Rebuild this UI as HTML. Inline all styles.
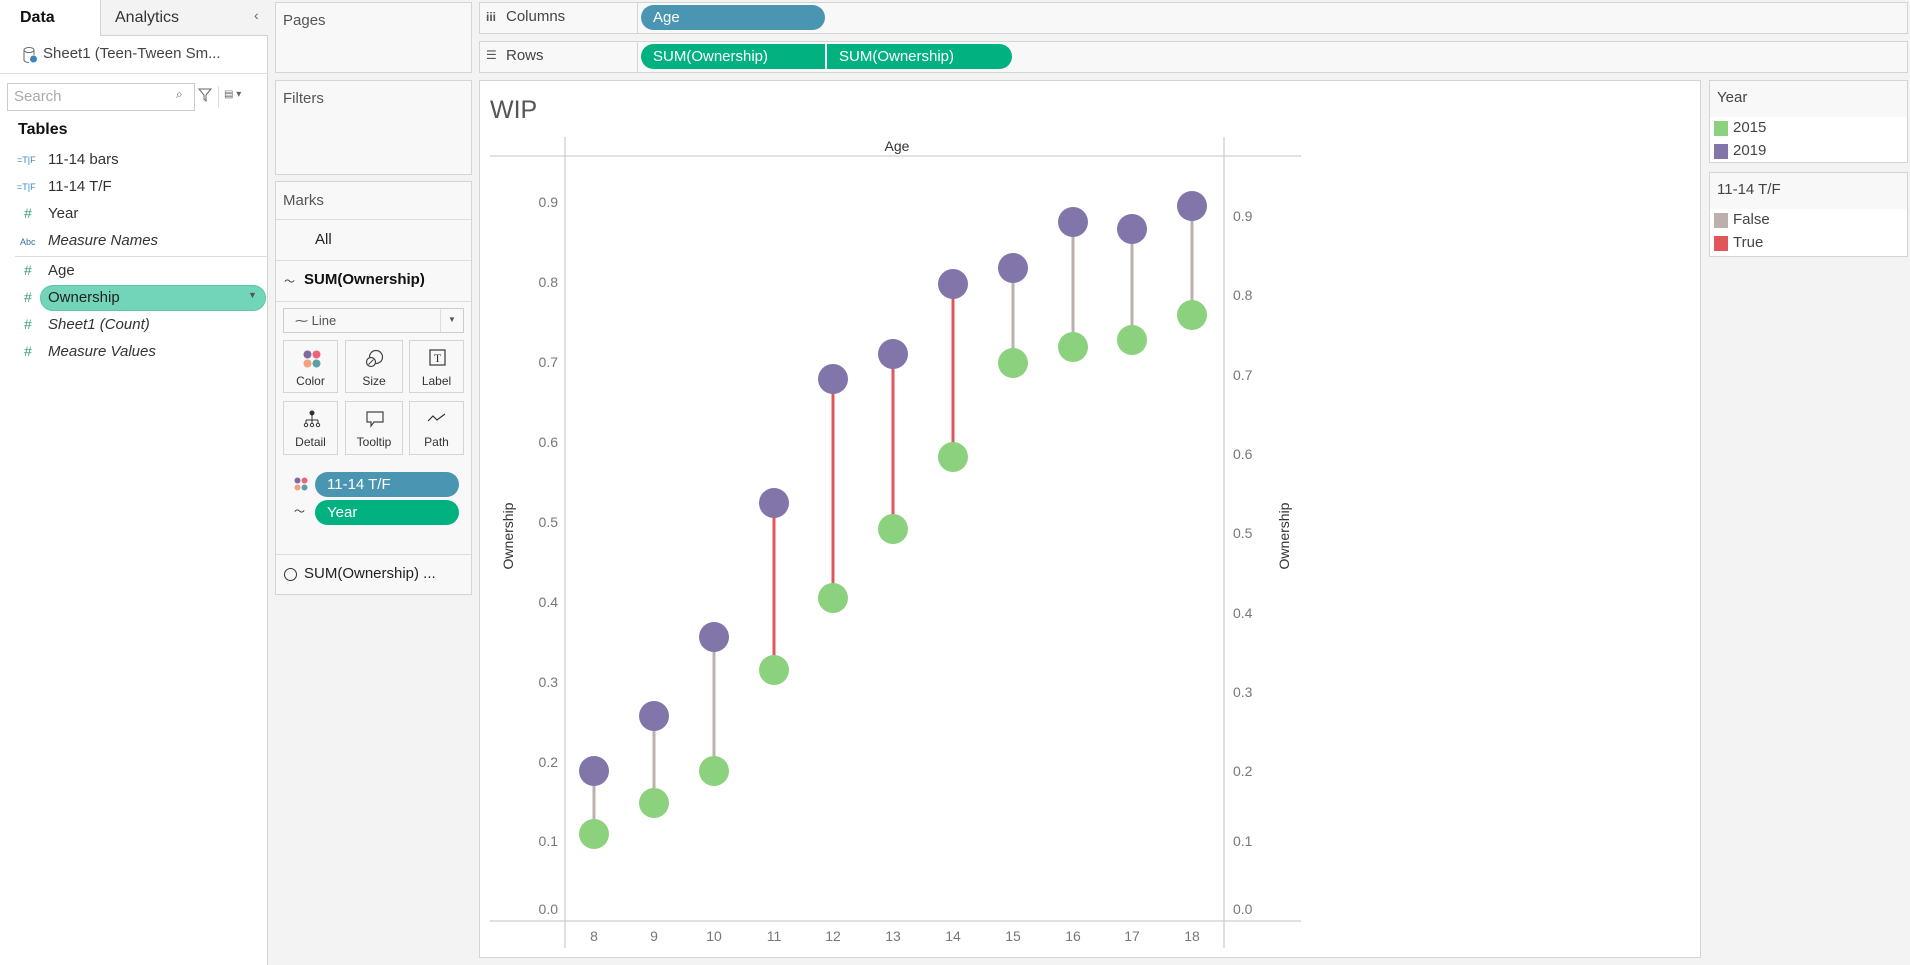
<!DOCTYPE html>
<html><head><meta charset="utf-8"><style>
*{box-sizing:border-box;margin:0;padding:0}
body{width:1910px;height:965px;background:#f3f3f3;font-family:"Liberation Sans",sans-serif;color:#333;position:relative;overflow:hidden;font-size:15px}
.a{position:absolute}
.box{position:absolute;background:#f8f8f8;border:1px solid #d4d4d4}
.t{position:absolute;white-space:nowrap}
.pill{position:absolute;color:#fff;border-radius:13px;padding-left:12px;font-size:15px;line-height:25px;white-space:nowrap}
.btn{position:absolute;border:1px solid #d4d4d4;background:#f8f8f8;font-size:12px;text-align:center}
.btn span{position:absolute;left:0;right:0;top:33px}
.hash{color:#3a9e7e;font-size:14px}
</style></head><body>
<!-- left panel -->
<div class="a" style="left:0;top:0;width:268px;height:965px;background:#fff;border-right:1px solid #d4d4d4"></div>
<div class="a" style="left:100px;top:0;width:168px;height:36px;background:#f3f3f3;border-left:1px solid #d4d4d4;border-bottom:1px solid #d4d4d4"></div>
<div class="t" style="left:20px;top:9px;font-weight:bold;font-size:16px;color:#111">Data</div>
<div class="t" style="left:115px;top:9px;font-size:16px">Analytics</div>
<div class="t" style="left:254px;top:7px;font-size:14px;color:#666">‹</div>
<svg class="a" style="left:22px;top:46px" width="16" height="18"><ellipse cx="7" cy="4" rx="5" ry="2.5" fill="none" stroke="#666"/><path d="M2 4v10c0 1.5 2.5 2.5 5 2.5M12 4v5" fill="none" stroke="#666"/><circle cx="11.5" cy="13" r="3.5" fill="#3c84c0"/></svg>
<div class="t" style="left:43px;top:45px;font-size:15px;color:#444">Sheet1 (Teen-Tween Sm...</div>
<div class="a" style="left:0;top:73px;width:268px;height:1px;background:#e0e0e0"></div>
<div class="a" style="left:7px;top:83px;width:188px;height:28px;border:1px solid #ccc;background:#fff"></div>
<div class="t" style="left:14px;top:88px;color:#aaa;font-size:15px">Search</div>
<div class="t" style="left:176px;top:87px;color:#666;font-size:12px">⌕</div>
<svg class="a" style="left:198px;top:88px" width="14" height="14"><path d="M1 1h12L8 7v6L6 11V7z" fill="none" stroke="#666"/></svg>
<div class="a" style="left:218px;top:86px;width:1px;height:22px;background:#ddd"></div>
<div class="t" style="left:224px;top:89px;font-size:10px;color:#666">▤ ▾</div>
<div class="t" style="left:18px;top:121px;font-weight:bold;font-size:16px;color:#111">Tables</div>
<div class="t" style="left:17px;top:155px;font-size:9px;color:#3c84c0">=T|F</div><div class="t" style="left:48px;top:151px">11-14 bars</div>
<div class="t" style="left:17px;top:182px;font-size:9px;color:#3c84c0">=T|F</div><div class="t" style="left:48px;top:178px">11-14 T/F</div>
<div class="t hash" style="left:24px;top:205px">#</div><div class="t" style="left:48px;top:205px">Year</div>
<div class="t" style="left:20px;top:237px;font-size:9px;color:#3c6e9c">Abc</div><div class="t" style="left:48px;top:232px;font-style:italic">Measure Names</div>
<div class="a" style="left:15px;top:256px;width:253px;height:1px;background:#ddd"></div>
<div class="t hash" style="left:24px;top:262px">#</div><div class="t" style="left:48px;top:262px">Age</div>
<div class="a" style="left:40px;top:285px;width:226px;height:26px;border-radius:13px;background:#72d4b8;border:1px solid #5cc7a6"></div>
<div class="t hash" style="left:24px;top:289px">#</div><div class="t" style="left:48px;top:289px;color:#222">Ownership</div>
<div class="t" style="left:248px;top:290px;font-size:9px;color:#555">▼</div>
<div class="t hash" style="left:24px;top:316px">#</div><div class="t" style="left:48px;top:316px;font-style:italic">Sheet1 (Count)</div>
<div class="t hash" style="left:24px;top:343px">#</div><div class="t" style="left:48px;top:343px;font-style:italic">Measure Values</div>

<!-- Pages / Filters / Marks -->
<div class="box" style="left:275px;top:2px;width:197px;height:71px"></div>
<div class="t" style="left:283px;top:12px;color:#555">Pages</div>
<div class="box" style="left:275px;top:80px;width:197px;height:95px"></div>
<div class="t" style="left:283px;top:90px;color:#555">Filters</div>
<div class="box" style="left:275px;top:181px;width:197px;height:414px"></div>
<div class="t" style="left:283px;top:192px;color:#555">Marks</div>
<div class="a" style="left:276px;top:219px;width:195px;height:1px;background:#ddd"></div>
<div class="t" style="left:315px;top:231px;color:#222">All</div>
<div class="a" style="left:276px;top:260px;width:195px;height:1px;background:#ddd"></div>
<div class="t" style="left:284px;top:273px;font-size:11px">〜</div>
<div class="t" style="left:304px;top:271px;font-weight:bold;color:#111">SUM(Ownership)</div>
<div class="a" style="left:276px;top:301px;width:195px;height:1px;background:#ddd"></div>
<div class="a" style="left:283px;top:308px;width:181px;height:25px;border:1px solid #ccc;background:#f8f8f8"></div>
<div class="a" style="left:440px;top:309px;width:1px;height:23px;background:#ddd"></div>
<div class="t" style="left:295px;top:313px;font-size:13px;color:#555">⁓ Line</div>
<div class="t" style="left:448px;top:315px;font-size:8px;color:#555">▼</div>
<div class="btn" style="left:283px;top:340px;width:55px;height:53px"><svg class="a" style="left:19px;top:9px" width="18" height="18"><circle cx="4.5" cy="4.5" r="4" fill="#7e6a9e"/><circle cx="13.5" cy="4.5" r="4" fill="#f0627a"/><circle cx="4.5" cy="13.5" r="4" fill="#f4a07a"/><circle cx="13.5" cy="13.5" r="4" fill="#5e9ea8"/></svg><span>Color</span></div>
<div class="btn" style="left:345px;top:340px;width:58px;height:53px"><svg class="a" style="left:19px;top:8px" width="20" height="20"><circle cx="11" cy="8" r="6.5" fill="none" stroke="#444" stroke-width="1.2"/><circle cx="6" cy="13" r="4.5" fill="#f8f8f8" stroke="#444" stroke-width="1.2"/><path d="M3.5 15.5l5-5" stroke="#444"/></svg><span>Size</span></div>
<div class="btn" style="left:409px;top:340px;width:55px;height:53px"><svg class="a" style="left:19px;top:8px" width="18" height="18"><rect x="1" y="1" width="15" height="15" fill="none" stroke="#444" stroke-width="1.3"/><text x="8.5" y="13" text-anchor="middle" font-family="Liberation Serif" font-size="12" fill="#333">T</text></svg><span>Label</span></div>
<div class="btn" style="left:283px;top:401px;width:55px;height:54px"><svg class="a" style="left:19px;top:8px" width="18" height="18"><circle cx="9" cy="3" r="2.5" fill="#333"/><path d="M9 5v5M3 10h12M3 10v3M9 10v3M15 10v3" stroke="#333"/><circle cx="3" cy="15" r="1.7" fill="none" stroke="#333"/><circle cx="9" cy="15" r="1.7" fill="none" stroke="#333"/><circle cx="15" cy="15" r="1.7" fill="none" stroke="#333"/></svg><span>Detail</span></div>
<div class="btn" style="left:345px;top:401px;width:58px;height:54px"><svg class="a" style="left:20px;top:9px" width="20" height="18"><path d="M1 1h16v10H8l-3 4v-4H1z" fill="none" stroke="#444" stroke-width="1.2"/></svg><span>Tooltip</span></div>
<div class="btn" style="left:409px;top:401px;width:55px;height:54px"><svg class="a" style="left:17px;top:10px" width="20" height="12"><path d="M1 9l5-5 4 4 8-6" fill="none" stroke="#333" stroke-width="1.2"/></svg><span>Path</span></div>
<svg class="a" style="left:294px;top:477px" width="14" height="14"><circle cx="3.5" cy="3.5" r="3" fill="#7e6a9e"/><circle cx="10.5" cy="3.5" r="3" fill="#f0627a"/><circle cx="3.5" cy="10.5" r="3" fill="#f4a07a"/><circle cx="10.5" cy="10.5" r="3" fill="#5e9ea8"/></svg>
<div class="pill" style="left:315px;top:472px;width:144px;background:#4a96b2">11-14 T/F</div>
<div class="t" style="left:294px;top:503px;font-size:11px">〜</div>
<div class="pill" style="left:315px;top:500px;width:144px;background:#02b180">Year</div>
<div class="a" style="left:276px;top:554px;width:195px;height:1px;background:#ddd"></div>
<div class="a" style="left:284px;top:568px;width:13px;height:13px;border:1.3px solid #333;border-radius:50%"></div>
<div class="t" style="left:304px;top:565px;color:#222">SUM(Ownership) ...</div>

<!-- shelves -->
<div class="box" style="left:479px;top:2px;width:1429px;height:32px"></div>
<div class="a" style="left:637px;top:2px;width:1px;height:32px;background:#d4d4d4"></div>
<div class="t" style="left:486px;top:10px;font-size:12px;font-weight:bold;color:#555">iii</div>
<div class="t" style="left:506px;top:8px;color:#444">Columns</div>
<div class="pill" style="left:641px;top:5px;width:184px;background:#4a96b2">Age</div>
<div class="box" style="left:479px;top:41px;width:1429px;height:32px"></div>
<div class="a" style="left:637px;top:41px;width:1px;height:32px;background:#d4d4d4"></div>
<div class="t" style="left:486px;top:48px;font-size:12px;color:#555">☰</div>
<div class="t" style="left:506px;top:47px;color:#444">Rows</div>
<div class="pill" style="left:641px;top:44px;width:184px;background:#02b180;border-radius:13px 0 0 13px">SUM(Ownership)</div>
<div class="pill" style="left:827px;top:44px;width:185px;background:#02b180;border-radius:0 13px 13px 0">SUM(Ownership)</div>

<!-- legends -->
<div class="box" style="left:1709px;top:80px;width:199px;height:83px;background:#fff"></div>
<div class="a" style="left:1710px;top:81px;width:197px;height:36px;background:#f8f8f8"></div>
<div class="t" style="left:1717px;top:89px;color:#444">Year</div>
<div class="a" style="left:1714px;top:121px;width:14px;height:15px;background:#8cd17d"></div><div class="t" style="left:1733px;top:119px;color:#444">2015</div>
<div class="a" style="left:1714px;top:144px;width:14px;height:15px;background:#8175aa"></div><div class="t" style="left:1733px;top:142px;color:#444">2019</div>
<div class="box" style="left:1709px;top:172px;width:199px;height:85px;background:#fff"></div>
<div class="a" style="left:1710px;top:173px;width:197px;height:36px;background:#f8f8f8"></div>
<div class="t" style="left:1717px;top:181px;color:#444">11-14 T/F</div>
<div class="a" style="left:1714px;top:213px;width:14px;height:15px;background:#bab0ac"></div><div class="t" style="left:1733px;top:211px;color:#444">False</div>
<div class="a" style="left:1714px;top:236px;width:14px;height:15px;background:#e15759"></div><div class="t" style="left:1733px;top:234px;color:#444">True</div>

<!-- chart -->
<div class="a" style="left:479px;top:80px;width:1222px;height:878px;background:#fff;border:1px solid #d4d4d4"></div>
<div class="t" style="left:490px;top:96px;font-size:25px;color:#555">WIP</div>
<svg class="a" style="left:0;top:0" width="1910" height="965" font-family="Liberation Sans" font-size="14">
<g stroke="#cfcfcf" stroke-width="1.3"><line x1="490" y1="156" x2="1301" y2="156"/><line x1="490" y1="921" x2="1301" y2="921"/><line x1="565" y1="137" x2="565" y2="948"/><line x1="1224" y1="137" x2="1224" y2="948"/></g>
<text x="897" y="151" text-anchor="middle" fill="#333">Age</text>
<g fill="#777" text-anchor="end">
<text x="558" y="207">0.9</text><text x="558" y="287">0.8</text><text x="558" y="367">0.7</text><text x="558" y="447">0.6</text><text x="558" y="527">0.5</text><text x="558" y="607">0.4</text><text x="558" y="687">0.3</text><text x="558" y="767">0.2</text><text x="558" y="846">0.1</text><text x="558" y="914">0.0</text></g>
<g fill="#777"><text x="1233" y="221">0.9</text><text x="1233" y="300">0.8</text><text x="1233" y="380">0.7</text><text x="1233" y="459">0.6</text><text x="1233" y="538">0.5</text><text x="1233" y="618">0.4</text><text x="1233" y="697">0.3</text><text x="1233" y="776">0.2</text><text x="1233" y="846">0.1</text><text x="1233" y="914">0.0</text></g>
<g fill="#777" text-anchor="middle"><text x="594" y="941">8</text><text x="654" y="941">9</text><text x="714" y="941">10</text><text x="774" y="941">11</text><text x="833" y="941">12</text><text x="893" y="941">13</text><text x="953" y="941">14</text><text x="1013" y="941">15</text><text x="1073" y="941">16</text><text x="1132" y="941">17</text><text x="1192" y="941">18</text></g>
<text transform="translate(513,536) rotate(-90)" text-anchor="middle" fill="#333">Ownership</text>
<text transform="translate(1289,536) rotate(-90)" text-anchor="middle" fill="#333">Ownership</text>
<g stroke-width="3">
<line x1="594" y1="771" x2="594" y2="834" stroke="#bab0ac"/>
<line x1="654" y1="716" x2="654" y2="803" stroke="#bab0ac"/>
<line x1="714" y1="637" x2="714" y2="771" stroke="#bab0ac"/>
<line x1="774" y1="503" x2="774" y2="670" stroke="#e15759"/>
<line x1="833" y1="379" x2="833" y2="598" stroke="#e15759"/>
<line x1="893" y1="354" x2="893" y2="529" stroke="#e15759"/>
<line x1="953" y1="284" x2="953" y2="457" stroke="#e15759"/>
<line x1="1013" y1="268" x2="1013" y2="363" stroke="#bab0ac"/>
<line x1="1073" y1="222" x2="1073" y2="347" stroke="#bab0ac"/>
<line x1="1132" y1="229" x2="1132" y2="340" stroke="#bab0ac"/>
<line x1="1192" y1="206" x2="1192" y2="315" stroke="#bab0ac"/>
</g>
<g fill="#8cd17d"><circle cx="594" cy="834" r="15"/><circle cx="654" cy="803" r="15"/><circle cx="714" cy="771" r="15"/><circle cx="774" cy="670" r="15"/><circle cx="833" cy="598" r="15"/><circle cx="893" cy="529" r="15"/><circle cx="953" cy="457" r="15"/><circle cx="1013" cy="363" r="15"/><circle cx="1073" cy="347" r="15"/><circle cx="1132" cy="340" r="15"/><circle cx="1192" cy="315" r="15"/></g>
<g fill="#8175aa"><circle cx="594" cy="771" r="15"/><circle cx="654" cy="716" r="15"/><circle cx="714" cy="637" r="15"/><circle cx="774" cy="503" r="15"/><circle cx="833" cy="379" r="15"/><circle cx="893" cy="354" r="15"/><circle cx="953" cy="284" r="15"/><circle cx="1013" cy="268" r="15"/><circle cx="1073" cy="222" r="15"/><circle cx="1132" cy="229" r="15"/><circle cx="1192" cy="206" r="15"/></g>
</svg>
</body></html>
